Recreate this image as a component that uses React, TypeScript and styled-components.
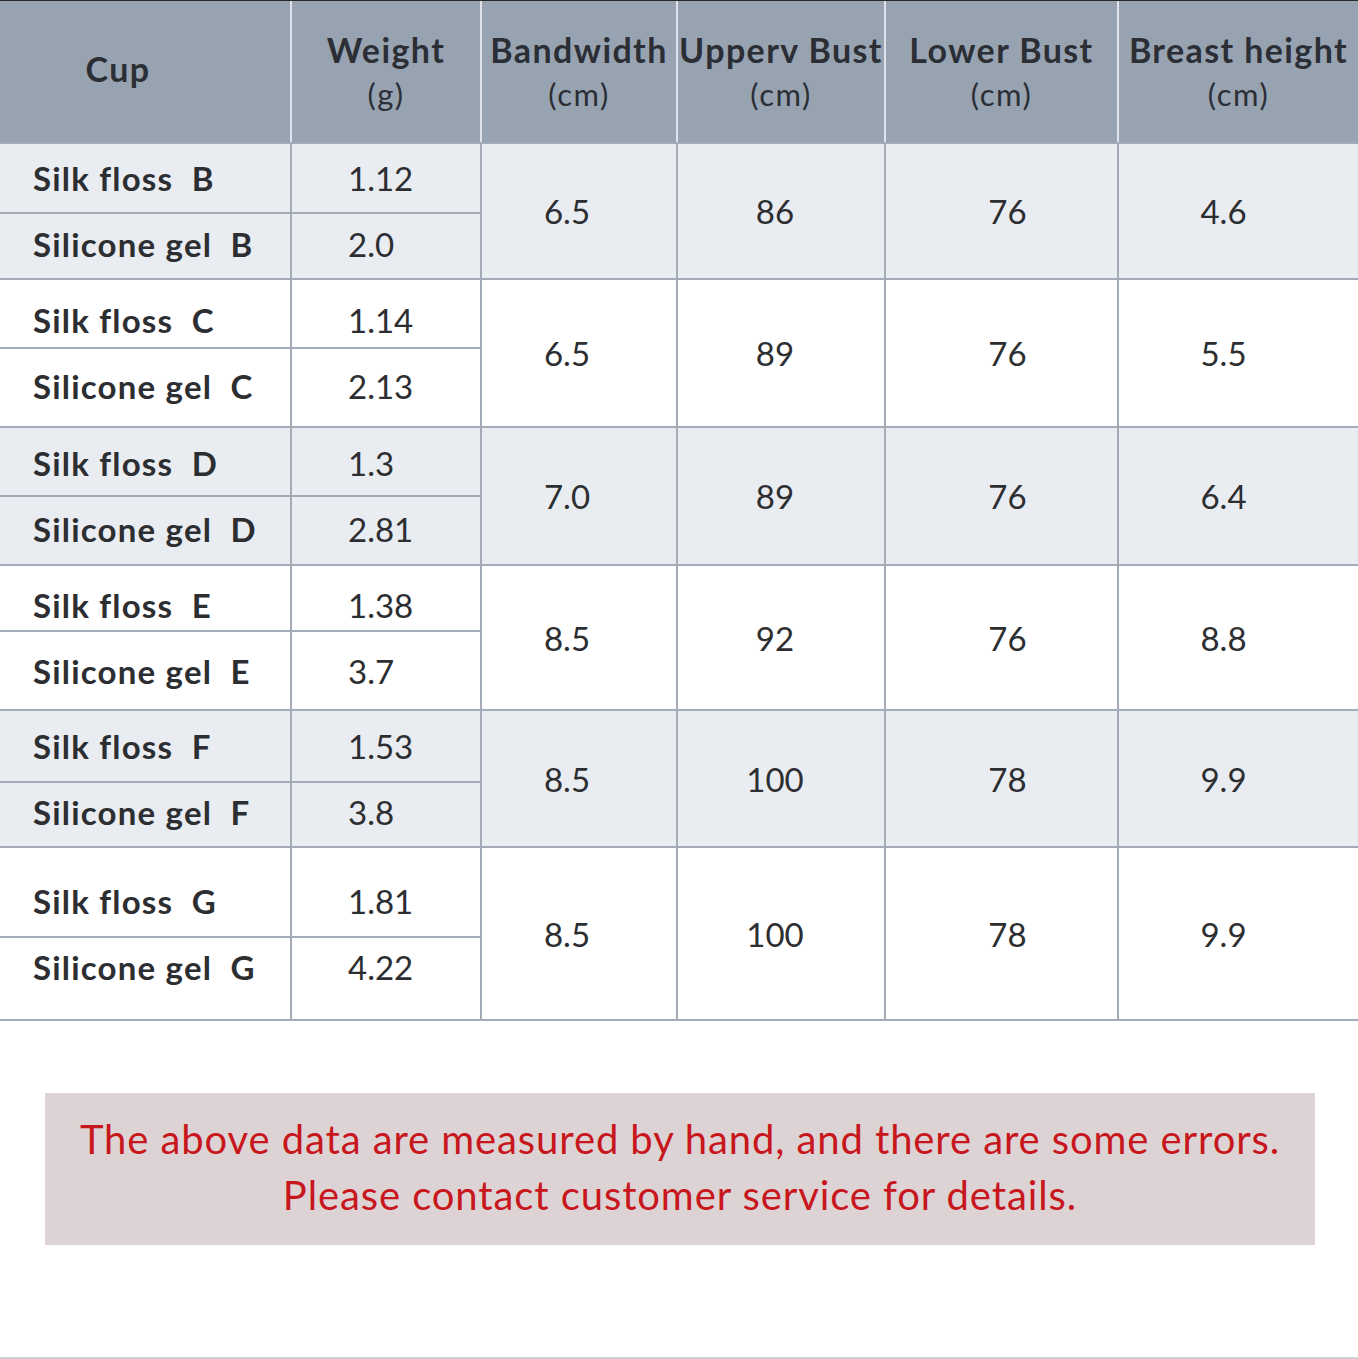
import React, { FC } from "react";
import styled, { createGlobalStyle } from "styled-components";

const GlobalStyle = createGlobalStyle`
  html, body {
    margin: 0;
    padding: 0;
    background: #ffffff;
  }
  body {
    font-family: Lato, "Noto Sans", "Liberation Sans", sans-serif;
    color: #2c2f33;
  }
`;

const COLUMNS = "290px 188px 194px 206px 231px 1fr";

type Group = {
  rows: [string, string][];
  band: string;
  upper: string;
  lower: string;
  height: string;
  heights: [number, number];
};

const groups: Group[] = [
  { rows: [["Silk floss  B", "1.12"], ["Silicone gel  B", "2.0"]], band: "6.5", upper: "86", lower: "76", height: "4.6", heights: [68, 64] },
  { rows: [["Silk floss  C", "1.14"], ["Silicone gel  C", "2.13"]], band: "6.5", upper: "89", lower: "76", height: "5.5", heights: [67, 77] },
  { rows: [["Silk floss  D", "1.3"], ["Silicone gel  D", "2.81"]], band: "7.0", upper: "89", lower: "76", height: "6.4", heights: [67, 67] },
  { rows: [["Silk floss  E", "1.38"], ["Silicone gel  E", "3.7"]], band: "8.5", upper: "92", lower: "76", height: "8.8", heights: [64, 77] },
  { rows: [["Silk floss  F", "1.53"], ["Silicone gel  F", "3.8"]], band: "8.5", upper: "100", lower: "78", height: "9.9", heights: [70, 63] },
  { rows: [["Silk floss  G", "1.81"], ["Silicone gel  G", "4.22"]], band: "8.5", upper: "100", lower: "78", height: "9.9", heights: [88, 81] },
];

const headers: { title: string; unit?: string }[] = [
  { title: "Cup" },
  { title: "Weight", unit: "(g)" },
  { title: "Bandwidth", unit: "(cm)" },
  { title: "Upperv Bust", unit: "(cm)" },
  { title: "Lower Bust", unit: "(cm)" },
  { title: "Breast height", unit: "(cm)" },
];

// the centred value columns sit a little off centre in the source
const valueShift = [-12, -6, 6, -15];

// the two labels of a group sit 33px either side of the group's middle,
// whatever the split between the sub-rows is
const labelShifts = (h: [number, number]): [number, number] => {
  const mid = (h[0] + 2 + h[1]) / 2;
  return [mid - 33 - h[0] / 2, mid + 33 - (h[0] + 2 + h[1] / 2)];
};

const App: FC = () => {
  const rowTemplate = groups
    .flatMap((g) => g.heights.map((h) => `${h}px`))
    .join(" ");

  return (
    <>
      <GlobalStyle />
      <Page>
        <HeaderGrid>
          {headers.map((h, i) => (
            <HeadCell key={h.title} $first={i === 0}>
              <HeadTitle>{h.title}</HeadTitle>
              {h.unit && <HeadUnit>{h.unit}</HeadUnit>}
            </HeadCell>
          ))}
        </HeaderGrid>

        <BodyGrid style={{ gridTemplateRows: rowTemplate }}>
          {groups.map((g, gi) => {
            const shaded = gi % 2 === 0;
            const start = gi * 2 + 1;
            const values = [g.band, g.upper, g.lower, g.height];
            const shifts = labelShifts(g.heights);
            return (
              <React.Fragment key={gi}>
                {g.rows.map(([name, weight], ri) => (
                  <React.Fragment key={name}>
                    <NameCell
                      $shaded={shaded}
                      $nudge={shifts[ri]}
                      style={{ gridRow: start + ri, gridColumn: 1 }}
                    >
                      {name}
                    </NameCell>
                    <WeightCell
                      $shaded={shaded}
                      $nudge={shifts[ri]}
                      style={{ gridRow: start + ri, gridColumn: 2 }}
                    >
                      {weight}
                    </WeightCell>
                  </React.Fragment>
                ))}
                {values.map((v, vi) => (
                  <ValueCell
                    key={vi}
                    $shaded={shaded}
                    $shift={valueShift[vi]}
                    style={{ gridRow: `${start} / span 2`, gridColumn: vi + 3 }}
                  >
                    {v}
                  </ValueCell>
                ))}
              </React.Fragment>
            );
          })}
        </BodyGrid>

        <NoteArea>
          <Note>
            The above data are measured by hand, and there are some errors.
            <br />
            Please contact customer service for details.
          </Note>
        </NoteArea>
      </Page>
    </>
  );
};

export default App;

const Page = styled.div`
  width: 1358px;
  height: 1359px;
  box-sizing: border-box;
  border-top: 1px solid #2a2a2a;
  border-bottom: 2px solid #cfd0d2;
  display: flex;
  flex-direction: column;
  overflow: hidden;
`;

const HeaderGrid = styled.div`
  display: grid;
  grid-template-columns: ${COLUMNS};
  grid-template-rows: 141px;
  column-gap: 2px;
  background: #dfe3e9;
`;

const HeadCell = styled.div<{ $first?: boolean }>`
  display: flex;
  flex-direction: column;
  align-items: center;
  justify-content: ${(p) => (p.$first ? "center" : "flex-start")};
  padding-top: ${(p) => (p.$first ? "0" : "27px")};
  padding-right: ${(p) => (p.$first ? "54px" : "0")};
  padding-bottom: ${(p) => (p.$first ? "6px" : "0")};
  background: #98a3b2;
  color: #2b2f35;
`;

const HeadTitle = styled.div`
  font-size: 34px;
  font-weight: 700;
  line-height: 44px;
  letter-spacing: 1.4px;
  white-space: nowrap;
`;

const HeadUnit = styled.div`
  font-size: 31px;
  font-weight: 400;
  line-height: 44px;
  letter-spacing: 1.5px;
`;

const BodyGrid = styled.div`
  display: grid;
  grid-template-columns: ${COLUMNS};
  gap: 2px;
  background: #a3abb8;
  border-top: 2px solid #a3abb8;
  border-bottom: 2px solid #a3abb8;
`;

const Cell = styled.div<{ $shaded: boolean; $nudge?: number }>`
  display: flex;
  align-items: center;
  box-sizing: border-box;
  background: ${(p) => (p.$shaded ? "#e9ecf1" : "#ffffff")};
  color: #2c2e31;
  font-size: 33px;
  white-space: pre;
  padding-top: ${(p) => Math.max(0, (p.$nudge ?? 0) * 2)}px;
  padding-bottom: ${(p) => Math.max(0, -(p.$nudge ?? 0) * 2)}px;
`;

const NameCell = styled(Cell)`
  padding-left: 33px;
  font-weight: 700;
  letter-spacing: 1.2px;
`;

const WeightCell = styled(Cell)`
  padding-left: 56px;
  font-weight: 400;
`;

const ValueCell = styled(Cell)<{ $shift: number }>`
  justify-content: center;
  font-weight: 400;
  padding-left: ${(p) => (p.$shift > 0 ? p.$shift * 2 : 0)}px;
  padding-right: ${(p) => (p.$shift < 0 ? -p.$shift * 2 : 0)}px;
`;

const NoteArea = styled.div`
  padding: 72px 43px 0 45px;
`;

const Note = styled.div`
  background: #ddd3d4;
  height: 152px;
  display: flex;
  align-items: center;
  justify-content: center;
  text-align: center;
  color: #c8161d;
  font-size: 40px;
  line-height: 56px;
  letter-spacing: 0.9px;
  padding-bottom: 4px;
  box-sizing: border-box;
`;
